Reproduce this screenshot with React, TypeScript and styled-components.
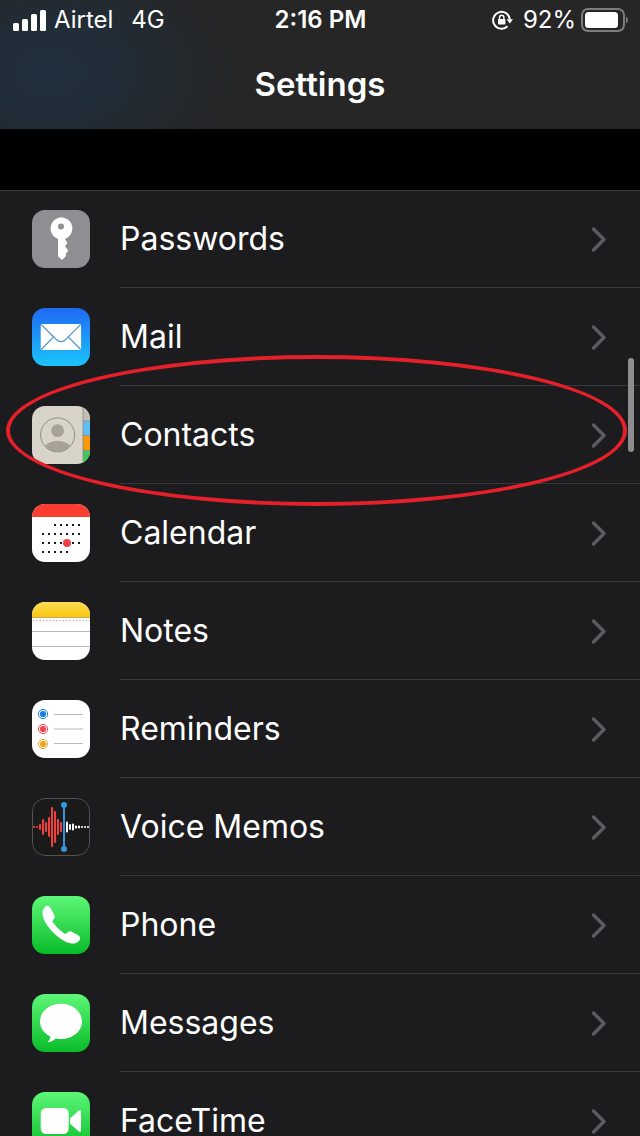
import React from "react";
import styled, { createGlobalStyle } from "styled-components";

const GlobalStyle = createGlobalStyle`
  *, *::before, *::after { box-sizing: border-box; }
  body {
    margin: 0;
    background: #000;
    color: #fff;
    font-family: Inter, "Liberation Sans", sans-serif;
  }
`;

const Screen = styled.div`
  position: relative;
  display: flex;
  flex-direction: column;
  height: 100vh;
  overflow: hidden;
`;

const Header = styled.header`
  flex: none;
  background:
    radial-gradient(ellipse 190px 130px at 50px 72px, #20303f 0%, #222b33 50%, rgba(38, 38, 38, 0) 100%),
    #262626;
`;

const StatusBar = styled.div`
  display: grid;
  grid-template-columns: 1fr auto 1fr;
  align-items: center;
  height: 40px;
  padding: 0 12px 0 13px;
  font-size: 24px;
  line-height: 40px;
`;

const StatusGroup = styled.div<{ $end?: boolean }>`
  display: flex;
  align-items: center;
  justify-content: ${(p) => (p.$end ? "flex-end" : "flex-start")};
  gap: ${(p) => (p.$end ? "4px" : "8px")};
`;

const Network = styled.span`
  margin-left: 10px;
`;

const Percent = styled.span`
  margin-left: 6px;
`;

const Clock = styled.time`
  font-weight: 600;
`;

const Title = styled.h1`
  margin: 0;
  padding: 20px 0 21px;
  font-size: 33px;
  line-height: 48px;
  font-weight: 600;
  text-align: center;
`;

const Content = styled.main`
  flex: 1;
  min-height: 0;
  padding-top: 61px;
  overflow-y: auto;
  scrollbar-width: none;
`;

const List = styled.ul`
  margin: 0;
  padding: 0;
  list-style: none;
  background: #1c1c1e;
  box-shadow: inset 0 1px #3a3a3c;
`;

const Item = styled.li`
  position: relative;
`;

const RowLink = styled.a`
  display: flex;
  align-items: center;
  gap: 30px;
  height: 98px;
  padding-left: 32px;
  color: inherit;
  text-decoration: none;
`;

const RowBody = styled.span`
  flex: 1;
  display: flex;
  align-items: center;
  justify-content: space-between;
  height: 98px;
  padding-right: 33px;
  border-bottom: 1px solid #38383a;
  font-size: 32px;
  line-height: 40px;
`;

const AppIcon = styled.svg`
  flex: none;
  width: 58px;
  height: 58px;
  border-radius: 13px;
`;

const Highlight = styled.span`
  position: absolute;
  z-index: 1;
  top: -31px;
  bottom: -22px;
  left: 6px;
  right: 13px;
  border: 4px solid #e5202a;
  border-radius: 50%;
  pointer-events: none;
`;

const ScrollThumb = styled.div`
  position: absolute;
  top: 358px;
  right: 6px;
  width: 6px;
  height: 94px;
  border-radius: 3px;
  background: #8e8e90;
`;

const SignalIcon = () => (
  <svg width="33" height="21" viewBox="0 0 33 21" fill="#fff" aria-hidden="true">
    <rect x="0" y="13" width="6" height="8" rx="1.5" />
    <rect x="9" y="9" width="6" height="12" rx="1.5" />
    <rect x="18" y="4" width="6" height="17" rx="1.5" />
    <rect x="27" y="0" width="6" height="21" rx="1.5" />
  </svg>
);

const RotationLockIcon = () => (
  <svg width="21" height="20" viewBox="0 0 21 20" fill="none" stroke="#fff" aria-hidden="true">
    <path d="M15.5 16.2A8.4 8.4 0 1 1 17.9 9.4" strokeWidth="2" />
    <path d="M14.6 9.2h6.4l-3.2 4.4z" fill="#fff" stroke="none" />
    <rect x="6" y="9" width="7.4" height="5.6" rx="0.8" fill="#fff" stroke="none" />
    <path d="M7.5 9.2V7.4a2.2 2.2 0 0 1 4.4 0v1.8" strokeWidth="1.4" />
  </svg>
);

const BatteryIcon = () => (
  <svg width="48" height="24" viewBox="0 0 48 24" aria-hidden="true">
    <rect x="2" y="1" width="42" height="22" rx="6" fill="none" stroke="#7d7d7d" strokeWidth="2" />
    <rect x="5" y="4" width="33" height="16" rx="3.5" fill="#fff" />
    <path d="M46 8.5q2 1 2 3.5t-2 3.5z" fill="#7d7d7d" />
  </svg>
);

const Chevron = () => (
  <svg width="16" height="26" viewBox="0 0 16 26" fill="none" stroke="#5c5c60" strokeWidth="3.4" strokeLinecap="round" strokeLinejoin="round" aria-hidden="true">
    <path d="M2.5 3L13 13.5L2.5 24" />
  </svg>
);

const GreenFill = ({ id }: { id: string }) => (
  <>
    <linearGradient id={id} x1="0" y1="0" x2="0" y2="1">
      <stop offset="0" stopColor="#5df777" />
      <stop offset="1" stopColor="#09bc29" />
    </linearGradient>
    <rect width="58" height="58" fill={`url(#${id})`} />
  </>
);

const passwordsArt = (
  <>
    <rect width="58" height="58" fill="#8e8e93" />
    <path
      fill="#fff"
      fillRule="evenodd"
      d="M29 7.2a11.3 11.3 0 0 1 4 21.9L35.5 33 33 36.3l3.2 4.3-2.5 3.4.3 2L30 50l-4-3.8V29.1A11.3 11.3 0 0 1 29 7.2zM29 13.4a3 3 0 1 0 0 6 3 3 0 0 0 0-6z"
    />
  </>
);

const mailArt = (
  <>
    <linearGradient id="mail" x1="0" y1="0" x2="0" y2="1">
      <stop offset="0" stopColor="#1f68f3" />
      <stop offset="1" stopColor="#1bc5fc" />
    </linearGradient>
    <rect width="58" height="58" fill="url(#mail)" />
    <rect x="8.7" y="16" width="40.4" height="26" rx="1.5" fill="#fff" />
    <path d="M9.3 16.6L22.5 29.7q6.5 8 13 0L48.6 16.6M9.3 41.5l12.2-12.6M48.6 41.5L36.4 28.9" fill="none" stroke="#4d94c4" strokeWidth="1.2" />
  </>
);

const contactsArt = (
  <>
    <rect width="58" height="58" fill="#d8d4c9" />
    <rect x="51" width="7" height="15" fill="#c3bfb4" />
    <rect x="51" y="15" width="7" height="14.5" fill="#5fc0f8" />
    <rect x="51" y="29.5" width="7" height="15" fill="#fb9709" />
    <rect x="51" y="44.5" width="7" height="13.5" fill="#3fc65c" />
    <path d="M51 0V58M51 15h7M51 29.5h7M51 44.5h7" stroke="#8b887f" strokeWidth="0.8" />
    <clipPath id="portrait">
      <circle cx="25.6" cy="28.9" r="16.6" />
    </clipPath>
    <circle cx="25.6" cy="24.7" r="6.4" fill="#a8a296" />
    <ellipse cx="25.6" cy="43.5" rx="13.5" ry="8.8" fill="#a8a296" clipPath="url(#portrait)" />
    <circle cx="25.6" cy="28.9" r="17" fill="none" stroke="#928c80" />
  </>
);

const calendarDots: [number, number][] = [];
[[2, 6], [0, 6], [0, 6], [0, 4]].forEach(([from, to], row) => {
  for (let col = from; col <= to; col++) calendarDots.push([11 + col * 6, 21 + row * 9]);
});

const calendarArt = (
  <>
    <rect width="58" height="58" fill="#fff" />
    <rect width="58" height="13" fill="#fc3d31" />
    {calendarDots.map(([x, y]) => (
      <rect key={`${x}-${y}`} x={x - 1} y={y - 1} width="2" height="2" fill="#1a1a1a" />
    ))}
    <circle cx="35" cy="39" r="4" fill="#ee4148" />
  </>
);

const notesArt = (
  <>
    <linearGradient id="notes" x1="0" y1="0" x2="0" y2="1">
      <stop offset="0" stopColor="#fbdb57" />
      <stop offset="1" stopColor="#fcc80d" />
    </linearGradient>
    <rect width="58" height="58" fill="#fff" />
    <rect width="58" height="15" fill="url(#notes)" />
    <path d="M0 15.5h58" stroke="#c2a95c" />
    <path d="M1 18.7h57" stroke="#c9b48a" strokeWidth="1.2" strokeDasharray="1.3 2" />
    <path d="M0 29.5h58M0 44.5h58" stroke="#b8b8b8" />
  </>
);

const remindersArt = (
  <>
    <rect width="58" height="58" fill="#fff" />
    {["#1a80e0", "#f0484e", "#f0a41c"].map((color, i) => (
      <g key={color}>
        <circle cx="11" cy={14 + i * 15} r="4.6" fill="none" stroke={color} />
        <circle cx="11" cy={14 + i * 15} r="3.1" fill={color} />
        <path d={`M22 ${14.5 + i * 14.5}h29`} stroke="#b9b9b9" />
      </g>
    ))}
  </>
);

const redWave = [1, 1, 3, 8, 5, 10, 20, 16, 8, 5];
const whiteWave = [5.5, 3, 3.5, 1.6, 1.4, 1, 1, 1];

const voiceArt = (
  <>
    <rect width="58" height="58" fill="#1b1a1b" />
    {redWave.map((h, i) => (
      <rect key={i} x={1 + i * 3} y={29 - h} width="2.1" height={h * 2} rx="0.9" fill="#ea4441" />
    ))}
    {whiteWave.map((h, i) => (
      <rect key={i} x={34 + i * 3} y={29 - h} width="2" height={h * 2} rx="0.9" fill="#fff" />
    ))}
    <path d="M32 7v44" stroke="#3596dc" strokeWidth="2" />
    <circle cx="32" cy="7" r="3" fill="#3596dc" />
    <circle cx="32" cy="51" r="3" fill="#3596dc" />
    <rect x="0.5" y="0.5" width="57" height="57" rx="12.5" fill="none" stroke="#545454" />
  </>
);

const phoneArt = (
  <>
    <GreenFill id="phone" />
    <path
      fill="#fff"
      d="M10.5 17.5C10.3 13.5 13 10 15.5 9.8 18 10 19.5 13.8 22 18.4 23.3 21 22.7 22.3 21.2 23.8 20.3 24.8 20.5 25.6 21.3 26.8 24.2 31 28 34.6 32 37.2 33.4 38 34.2 37.9 35 36.9 36.5 35 38 34.6 40.5 36 45 38.5 48.2 39.7 48.2 42.2 48 45 44.5 47.7 40.5 47.6 34 47.4 26 41.5 20.5 35.8 15 30 10.8 23.5 10.5 17.5z"
    />
  </>
);

const messagesArt = (
  <>
    <GreenFill id="messages" />
    <path
      fill="#fff"
      d="M29 9.7C40.6 9.7 50 17.6 50 27.4S40.6 45 29 45c-1.9 0-3.7-.2-5.4-.6C21.5 46.5 18.500 48 15.3 48.3c1.9-1.6 3-3.6 3.1-5.8C12 39.3 8 33.7 8 27.4 8 17.600 17.4 9.7 29 9.7z"
    />
  </>
);

const facetimeArt = (
  <>
    <GreenFill id="facetime" />
    <rect x="8.7" y="16" width="28" height="26" rx="5.5" fill="#fff" />
    <path d="M38 26.5L46.5 18.8q2.5-1.6 2.5 1V38.2q0 2.6-2.5 1L38 31.5z" fill="#fff" />
  </>
);

type AppEntry = { name: string; art: React.ReactNode; highlighted?: boolean };

const apps: AppEntry[] = [
  { name: "Passwords", art: passwordsArt },
  { name: "Mail", art: mailArt },
  { name: "Contacts", art: contactsArt, highlighted: true },
  { name: "Calendar", art: calendarArt },
  { name: "Notes", art: notesArt },
  { name: "Reminders", art: remindersArt },
  { name: "Voice Memos", art: voiceArt },
  { name: "Phone", art: phoneArt },
  { name: "Messages", art: messagesArt },
  { name: "FaceTime", art: facetimeArt },
];

export default function App() {
  return (
    <Screen>
      <GlobalStyle />
      <Header>
        <StatusBar>
          <StatusGroup>
            <SignalIcon />
            <span>Airtel</span>
            <Network>4G</Network>
          </StatusGroup>
          <Clock>2:16 PM</Clock>
          <StatusGroup $end>
            <RotationLockIcon />
            <Percent>92%</Percent>
            <BatteryIcon />
          </StatusGroup>
        </StatusBar>
        <Title>Settings</Title>
      </Header>
      <Content>
        <List>
          {apps.map(({ name, art, highlighted }) => (
            <Item key={name}>
              <RowLink href={`#${name.toLowerCase().replace(" ", "-")}`}>
                <AppIcon viewBox="0 0 58 58" aria-hidden="true">{art}</AppIcon>
                <RowBody>
                  {name}
                  <Chevron />
                </RowBody>
              </RowLink>
              {highlighted && <Highlight />}
            </Item>
          ))}
        </List>
      </Content>
      <ScrollThumb />
    </Screen>
  );
}
